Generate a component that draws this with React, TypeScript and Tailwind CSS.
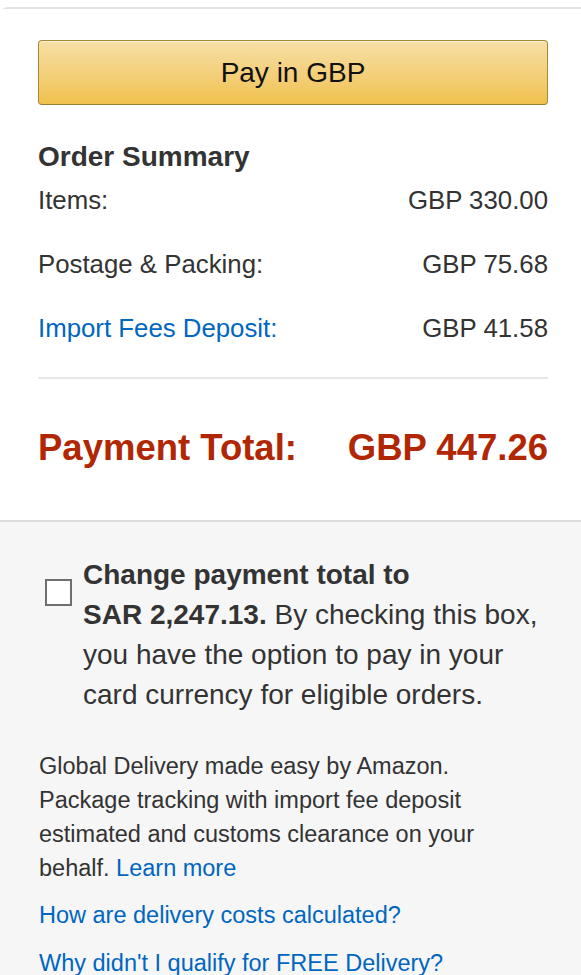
const rows = [
  { label: 'Items:', value: 'GBP 330.00', link: false },
  { label: 'Postage & Packing:', value: 'GBP 75.68', link: false },
  { label: 'Import Fees Deposit:', value: 'GBP 41.58', link: true }
];

export default function App() {
  return (
    <div className="min-h-screen overflow-hidden bg-white pt-[7px] font-['Liberation_Sans',Arial,sans-serif] text-[#333]">
      <div className="-mr-[6px] flex min-h-[968px] flex-col rounded-tl-[10px] border-l-2 border-t-2 border-[#e3e3e3] -ml-[2px]">
        <section className="bg-white pb-[51px] pl-[38px] pr-[39px] pt-[31px]">
          <button className="h-[65px] w-full rounded-[4px] border border-[#a88734] border-b-[#9c7e31] bg-gradient-to-b from-[#f7dfa5] to-[#f0c14b] text-[28px] text-[#111] shadow-[inset_0_1px_0_rgba(255,255,255,0.6)]">
            Pay in GBP
          </button>

          <h2 className="mt-[36px] text-[28px] font-bold leading-[32px]">Order Summary</h2>

          <div className="mt-[12px] flex flex-col gap-[34px]">
            {rows.map((row) => (
              <div key={row.label} className="flex h-[30px] items-center justify-between text-[25.8px] leading-[30px]">
                <span className={row.link ? 'text-[#0066c0]' : ''}>{row.label}</span>
                <span>{row.value}</span>
              </div>
            ))}
          </div>

          <div className="mt-[34px] h-[2px] bg-[#e7e7e7]" />

          <div className="mt-[48px] flex h-[42px] items-center justify-between text-[36.5px] font-bold leading-[42px] text-[#b12704]">
            <span>Payment Total:</span>
            <span>GBP 447.26</span>
          </div>
        </section>

        <section className="flex-1 border-t-2 border-[#dddddd] bg-[#f6f6f6] pl-[39px] pr-[39px] pt-[33px]">
          <label className="flex items-start gap-[11px] pl-[6px]">
            <span className="mt-[24px] h-[27px] w-[27px] shrink-0 border-2 border-[#6f6f6f] bg-white" />
            <span className="text-[28px] leading-[40px]">
              <b>Change payment total to </b>
              <b className="whitespace-nowrap">SAR 2,247.13.</b> By checking this box, you have the option to pay in your card currency
              for eligible orders.
            </span>
          </label>

          <p className="mt-[34px] text-[23.5px] leading-[34px]">
            Global Delivery made easy by Amazon.
            <br />
            Package tracking with import fee deposit estimated and customs clearance on your behalf.{' '}
            <a className="text-[#0066c0]">Learn more</a>
          </p>

          <a className="mt-[13px] block text-[23.5px] leading-[34px] text-[#0066c0]">How are delivery costs calculated?</a>
          <a className="mt-[14px] block text-[23.5px] leading-[34px] text-[#0066c0]">Why didn't I qualify for FREE Delivery?</a>
        </section>
      </div>
    </div>
  );
}
